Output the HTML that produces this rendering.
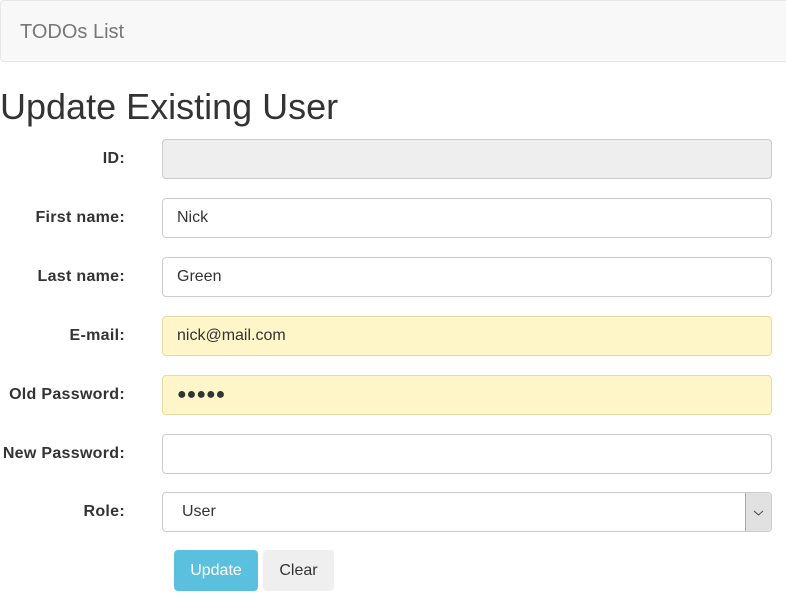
<!DOCTYPE html>
<html><head><style>
body{margin:0;font-family:"Liberation Sans",Arial,sans-serif;color:#333;background:#fff;width:786px;height:605px;overflow:hidden;position:relative}
.nav{position:absolute;left:0;top:0;width:800px;height:62px;background:#f8f8f8;border:1px solid #e7e7e7;border-radius:4px;box-sizing:border-box}
.nav span{position:absolute;left:19px;top:20px;font-size:20px;color:#777}
h1{position:absolute;left:0;top:87px;margin:0;font-size:36px;font-weight:500;line-height:40px}
.lbl{position:absolute;right:661px;font-weight:bold;font-size:16px;line-height:20px;text-align:right;white-space:nowrap;letter-spacing:0.3px}
.in{position:absolute;left:162px;width:610px;height:40px;box-sizing:border-box;border:1px solid #ccc;border-radius:4px;font-size:16px;line-height:38px;padding-left:14px;background:#fff}
.ro{background:#eee}
.y{background:#fef6c8;border-color:#e6dca3}
.sel{padding-left:19px}
.arrow{position:absolute;right:0;top:0;width:25px;height:38px;background:#e1e1e1;border-left:1px solid #aaa;border-radius:0 3px 3px 0}
.btn{position:absolute;top:550px;height:41px;border-radius:4px;font-size:16px;line-height:41px;text-align:center}
</style></head><body>
<div class="nav"><span>TODOs List</span></div>
<h1>Update Existing User</h1>
<div class="lbl" style="top:149px">ID:</div><div class="in ro" style="top:139px"></div>
<div class="lbl" style="top:208px">First name:</div><div class="in" style="top:198px">Nick</div>
<div class="lbl" style="top:267px">Last name:</div><div class="in" style="top:257px">Green</div>
<div class="lbl" style="top:326px">E-mail:</div><div class="in y" style="top:316px">nick@mail.com</div>
<div class="lbl" style="top:385px">Old Password:</div><div class="in y" style="top:375px;font-size:16px;letter-spacing:0px">●●●●●</div>
<div class="lbl" style="top:444px">New Password:</div><div class="in" style="top:434px"></div>
<div class="lbl" style="top:502px">Role:</div><div class="in sel" style="top:492px">User<div class="arrow"><svg width="25" height="38"><path d="M8 18l4.5 4 4.5-4" fill="none" stroke="#444" stroke-width="1"/></svg></div></div>
<div class="btn" style="left:174px;width:84px;background:#5bc0de;color:#fff">Update</div>
<div class="btn" style="left:263px;width:71px;background:#efefef;color:#333">Clear</div>
</body></html>
